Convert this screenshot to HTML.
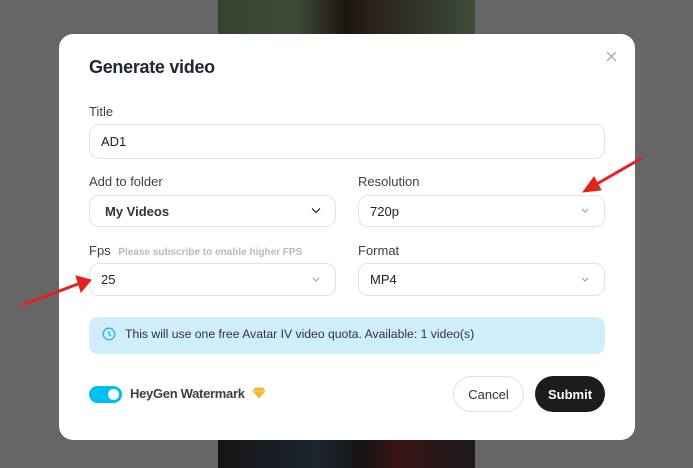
<!DOCTYPE html>
<html><head><style>
*{box-sizing:border-box;margin:0;padding:0}
body{width:693px;height:468px;background:#666;font-family:"Liberation Sans",sans-serif;position:relative;overflow:hidden}
.bg1{position:absolute;left:218px;top:0;width:257px;height:40px;background:linear-gradient(90deg,#36432f,#3d4c38 30%,#1d1410 50%,#2a2119 60%,#3e4c3a)}
.bg2{position:absolute;left:218px;top:436px;width:257px;height:32px;background:linear-gradient(90deg,#151515,#1c2430 40%,#141414 55%,#3a1414 70%,#1a1a1a)}
.m{position:absolute;left:59px;top:34px;width:576px;height:406px;background:#fff;border-radius:14px}
.a{position:absolute}
.lbl{font-size:13px;color:#3a3f4a}
.inp{position:absolute;border:1px solid #e2e2e6;border-radius:10px;background:#fff;font-size:13px;color:#222;padding-left:11px;display:flex;align-items:center}
.chev{position:absolute;right:14px;top:50%;margin-top:-4px}
</style></head><body>
<div class="bg1"></div><div class="bg2"></div>
<div class="m"></div>
<div class="a" style="left:89px;top:57px;font-size:18px;font-weight:bold;color:#222733;letter-spacing:-0.3px">Generate video</div>
<svg class="a" style="left:606px;top:51px" width="11" height="11" viewBox="0 0 11 11"><path d="M1 1L10 10M10 1L1 10" stroke="#9aa0aa" stroke-width="1.2"/></svg>
<div class="a lbl" style="left:89px;top:104px">Title</div>
<div class="inp" style="left:89px;top:124px;width:516px;height:35px">AD1</div>
<div class="a lbl" style="left:89px;top:174px">Add to folder</div>
<div class="a lbl" style="left:358px;top:174px">Resolution</div>
<div class="inp" style="left:89px;top:195px;width:247px;height:32px;padding-left:15px;font-weight:bold;color:#333">My Videos<svg class="chev" width="10" height="7"><path d="M1 1.5L5 5.5L9 1.5" stroke="#333" stroke-width="1.3" fill="none"/></svg></div>
<div class="inp" style="left:358px;top:195px;width:247px;height:32px">720p<svg class="chev" width="10" height="7"><path d="M2 2L5 5L8 2" stroke="#999" stroke-width="1" fill="none"/></svg></div>
<div class="a lbl" style="left:89px;top:243px">Fps <span style="font-size:10px;color:#b5bac3;font-weight:bold;margin-left:4px">Please subscribe to enable higher FPS</span></div>
<div class="a lbl" style="left:358px;top:243px">Format</div>
<div class="inp" style="left:89px;top:263px;width:247px;height:33px">25<svg class="chev" width="10" height="7"><path d="M2 2L5 5L8 2" stroke="#999" stroke-width="1" fill="none"/></svg></div>
<div class="inp" style="left:358px;top:263px;width:247px;height:33px">MP4<svg class="chev" width="10" height="7"><path d="M2 2L5 5L8 2" stroke="#999" stroke-width="1" fill="none"/></svg></div>
<div class="a" style="left:89px;top:317px;width:516px;height:37px;background:#d0eef9;border-radius:9px;font-size:12.2px;color:#333;padding:10px 0 0 36px">This will use one free Avatar IV video quota. Available: 1 video(s)</div>
<svg class="a" style="left:102px;top:327px" width="14" height="14" viewBox="0 0 14 14"><circle cx="7" cy="7" r="5.8" stroke="#1fb7ef" stroke-width="1.3" fill="none"/><path d="M7 4V7.3L9 8.8" stroke="#1fb7ef" stroke-width="1.3" fill="none"/></svg>
<div class="a" style="left:89px;top:386px;width:33px;height:17px;border-radius:9px;background:#00bdf2"><div style="position:absolute;right:3px;top:3px;width:11px;height:11px;border-radius:6px;background:#fff"></div></div>
<div class="a" style="left:130px;top:386px;font-size:13px;color:#3a3f4a;font-weight:bold;letter-spacing:-0.3px">HeyGen Watermark</div>
<svg class="a" style="left:252px;top:387px" width="14" height="12" viewBox="0 0 14 12"><path d="M3 0.5H11L13.5 4L7 11.5L0.5 4Z" fill="#f7b733"/><path d="M0.5 4H13.5" stroke="#fcd37a" stroke-width="1"/></svg>
<div class="a" style="left:453px;top:376px;width:71px;height:36px;border:1px solid #e0e0e0;border-radius:18px;font-size:13px;color:#333;display:flex;align-items:center;justify-content:center">Cancel</div>
<div class="a" style="left:535px;top:376px;width:70px;height:36px;background:#1c1c1c;border-radius:18px;font-size:13px;color:#fff;font-weight:bold;display:flex;align-items:center;justify-content:center">Submit</div>
<svg class="a" style="left:0;top:0" width="693" height="468"><g stroke="#e3211d" stroke-width="3" fill="#e3211d"><line x1="642" y1="158" x2="595" y2="185"/><polygon points="583,192 594,177 601,190" stroke-width="1"/><line x1="22" y1="305" x2="78" y2="284"/><polygon points="91,280 76,276 81,292" stroke-width="1"/></g></svg>
</body></html>
